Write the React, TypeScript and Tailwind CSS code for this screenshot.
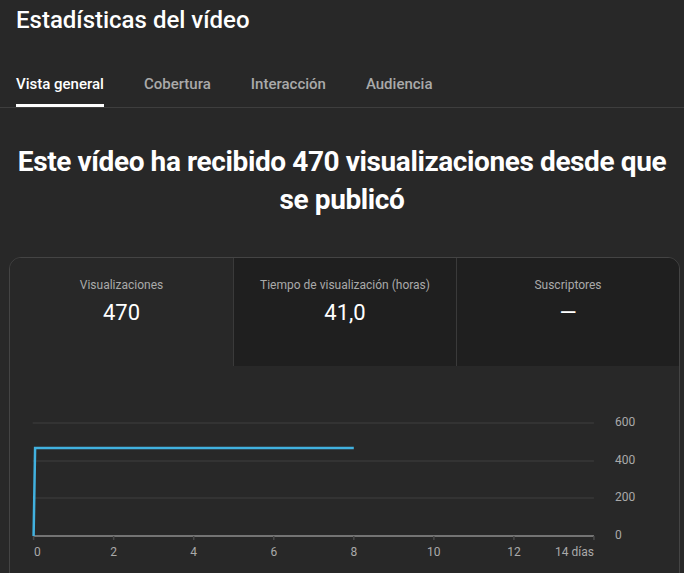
import React from "react";

const xs = [2, 4, 6, 8, 10, 12];
const X0 = 23.6;
const STEP = 80.05;
const XEND = X0 + 7 * STEP;

export default function App() {
  return (
    <div className="w-[684px] h-[573px] overflow-hidden bg-[#282828] text-white font-['Roboto',sans-serif]">
      <div className="px-4 pt-[5px] h-[56px]">
        <h1 className="text-[24px] leading-[30px] font-medium tracking-[0px]">Estadísticas del vídeo</h1>
      </div>
      <div className="flex gap-10 px-4 border-b border-[#3e3e3e] h-[52px] items-stretch">
        <div className="relative flex items-center pt-[5px] text-[15px] font-medium text-white">
          Vista general
          <div className="absolute left-0 right-0 bottom-0 h-[3px] bg-white" />
        </div>
        <div className="flex items-center pt-[5px] text-[15px] font-medium text-[#aaaaaa]">Cobertura</div>
        <div className="flex items-center pt-[5px] text-[15px] font-medium text-[#aaaaaa]">Interacción</div>
        <div className="flex items-center pt-[5px] text-[15px] font-medium text-[#aaaaaa]">Audiencia</div>
      </div>
      <div className="pt-[35px] px-2 text-center text-[28px] leading-[38px] font-bold tracking-[-0.4px]">
        Este vídeo ha recibido 470 visualizaciones desde que
        <br />
        se publicó
      </div>
      <div className="ml-[9px] w-[671px] mt-[38px] border border-[#444444] rounded-[12px] overflow-hidden">
        <div className="grid grid-cols-3 h-[108px]">
          <div className="bg-[#282828] flex flex-col items-center pt-[19px]">
            <div className="text-[12px] leading-[16px] text-[#aaaaaa]">Visualizaciones</div>
            <div className="text-[22px] leading-[30px] mt-[5px]">470</div>
          </div>
          <div className="bg-[#1f1f1f] border-l border-[#3a3a3a] flex flex-col items-center pt-[19px]">
            <div className="text-[12px] leading-[16px] text-[#aaaaaa]">Tiempo de visualización (horas)</div>
            <div className="text-[22px] leading-[30px] mt-[5px]">41,0</div>
          </div>
          <div className="bg-[#1f1f1f] border-l border-[#3a3a3a] flex flex-col items-center pt-[19px]">
            <div className="text-[12px] leading-[16px] text-[#aaaaaa]">Suscriptores</div>
            <div className="text-[22px] leading-[30px] mt-[5px]">—</div>
          </div>
        </div>
        <div className="h-[220px]">
          <svg width="669" height="220" className="block">
            {[57, 95, 132].map((y) => (
              <line key={y} x1={X0 - 1} x2={XEND} y1={y} y2={y} stroke="#333333" strokeWidth="2" />
            ))}
            <line x1={X0} x2={XEND} y1="170" y2="170" stroke="#8e8e8e" strokeWidth="1.5" />
            {[0, 2, 4, 6, 8, 10, 12, 14].map((d) => {
              const x = X0 + (d / 2) * STEP;
              return <line key={d} x1={x} x2={x} y1="170" y2="174" stroke="#4a4a4a" strokeWidth="1.5" />;
            })}
            <path d={`M${X0} 170 L${X0 + 1.5} 82 L${X0 + 4 * STEP} 82`} fill="none" stroke="#41b1df" strokeWidth="2.5" />
            <text x={X0 + 0.5} y="187" fill="#aaaaaa" fontSize="12" dominantBaseline="middle" fontFamily="Roboto, sans-serif">
              0
            </text>
            {xs.map((d) => {
              const x = X0 + (d / 2) * STEP;
              return (
                <text key={d} x={x} y="187" fill="#aaaaaa" fontSize="12" textAnchor="middle" dominantBaseline="middle" fontFamily="Roboto, sans-serif">
                  {d}
                </text>
              );
            })}
            <text x={XEND} y="187" fill="#aaaaaa" fontSize="12" textAnchor="end" dominantBaseline="middle" fontFamily="Roboto, sans-serif">
              14 días
            </text>
            {[
              ["600", 57],
              ["400", 95],
              ["200", 132],
              ["0", 170],
            ].map(([t, y]) => (
              <text key={t} x="605" y={y} fill="#aaaaaa" fontSize="12" dominantBaseline="middle" fontFamily="Roboto, sans-serif">
                {t}
              </text>
            ))}
          </svg>
        </div>
      </div>
    </div>
  );
}
